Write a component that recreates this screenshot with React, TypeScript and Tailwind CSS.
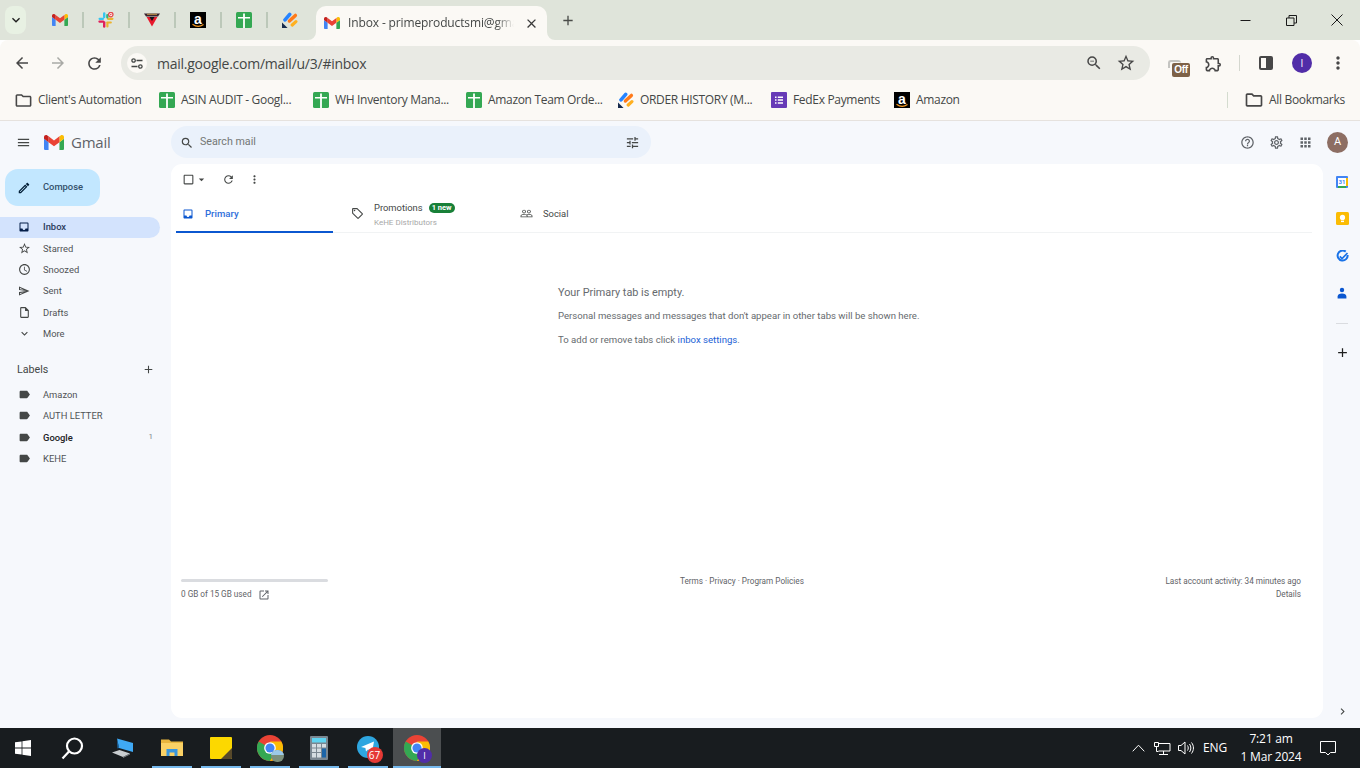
import React from "react";
import {
  MdAdd, MdApps, MdArrowBack, MdArrowDropDown, MdArrowForward, MdCheckBoxOutlineBlank, MdChevronRight, MdClose,
  MdExpandMore, MdInbox, MdKeyboardArrowDown, MdLabel, MdMenu, MdMoreVert, MdOutlineAccessTime, MdOutlineCreate,
  MdOutlineExtension, MdOutlineFolder, MdOutlineHelpOutline, MdOutlineInsertDriveFile, MdOutlineLocalOffer, MdOutlineOpenInNew,
  MdOutlineSend, MdOutlineSettings, MdOutlineStarBorder, MdPeopleOutline, MdRefresh, MdSearch, MdTune, MdZoomOut,
} from "react-icons/md";

const GmailM = ({ w = 16, h = 12 }: { w?: number; h?: number }) => (
  <svg width={w} height={h} viewBox="52 42 88 66">
    <path fill="#4285f4" d="M58 108h14V74L52 59v43c0 3.32 2.69 6 6 6" />
    <path fill="#34a853" d="M120 108h14c3.32 0 6-2.69 6-6V59l-20 15" />
    <path fill="#fbbc04" d="M120 48v26l20-15v-8c0-7.42-8.47-11.65-14.4-7.2" />
    <path fill="#ea4335" d="M72 74V48l24 18 24-18v26L96 92" />
    <path fill="#c5221f" d="M52 51v8l20 15V48l-5.6-4.2c-5.94-4.45-14.4-.22-14.4 7.2" />
  </svg>
);

const Sheets = () => (
  <svg width="16" height="16" viewBox="0 0 16 16">
    <rect width="16" height="16" rx="1.5" fill="#34a853" />
    <path d="M7.1 1.5h1.8v3.4H14v1.7H8.900V16H7.100V6.600H2V4.900h5.100z" fill="#fff" />
  </svg>
);

const Slack = () => (
  <svg width="16" height="16" viewBox="0 0 16 16">
    <path d="M6.2 1.5v3.6" stroke="#36c5f0" strokeWidth="2.4" strokeLinecap="round" />
    <path d="M1.6 6.8h3.4" stroke="#36c5f0" strokeWidth="2.2" strokeLinecap="round" />
    <path d="M1.4 9.6h3.8" stroke="#e01e5a" strokeWidth="2.2" strokeLinecap="round" />
    <path d="M6.2 10.5v4" stroke="#e01e5a" strokeWidth="2.4" strokeLinecap="round" />
    <path d="M10 6.8h4.4" stroke="#ecb22e" strokeWidth="2.2" strokeLinecap="round" />
    <path d="M9.2 10.5h3.6M9.4 11v3.4" stroke="#ecb22e" strokeWidth="2.2" strokeLinecap="round" />
    <path d="M9.3 3v2.4" stroke="#2eb67d" strokeWidth="2.2" strokeLinecap="round" />
    <circle cx="12.8" cy="2.6" r="2.2" fill="#fff" stroke="#e5484d" strokeWidth="1.3" />
    <circle cx="12.8" cy="2.6" r=".8" fill="#e5484d" />
  </svg>
);

const Pennant = () => (
  <svg width="16" height="14" viewBox="0 0 16 14">
    <path d="M0 .5h16L14 3.4H2z" fill="#3a2430" />
    <path d="M3 1.3h10" stroke="#d5a24c" strokeWidth=".9" />
    <path d="M2.6 4h10.8L8 13.6z" fill="#e8192c" />
    <path d="M5.5 4h5L8 8z" fill="#12121a" />
  </svg>
);

const AmazonIcon = () => (
  <div className="relative w-[16px] h-[16px] bg-black flex justify-center shrink-0">
    <span className="text-white font-bold text-[14px] leading-[14px] font-['Liberation_Sans',sans-serif]">a</span>
    <svg className="absolute left-0 bottom-0" width="16" height="5" viewBox="0 0 16 5">
      <path d="M2.5 1.2c3.5 2.6 7.5 2.6 11 .3" stroke="#f59a23" strokeWidth="1.2" fill="none" />
    </svg>
  </div>
);

const Jira = () => (
  <svg width="16" height="16" viewBox="0 0 16 16">
    <path d="M3 7.800 7.700 2.300" stroke="#2684ff" strokeWidth="3.600" strokeLinecap="round" />
    <path d="M7.400 9 13.400 3.400" stroke="#ff7a1a" strokeWidth="3.400" strokeLinecap="round" />
    <path d="M10.200 13 13.900 9.600" stroke="#ffb020" strokeWidth="3.200" strokeLinecap="round" />
    <path d="M0 10.600 5.600 16H0z" fill="#172b4d" />
  </svg>
);

const Forms = () => (
  <svg width="16" height="16" viewBox="0 0 16 16">
    <rect width="16" height="16" rx="1" fill="#673ab7" />
    <path d="M4 4.4h1.5v1.5H4zM4 7.3h1.5v1.5H4zM4 10.2h1.5v1.5H4zM6.8 4.4H12v1.5H6.8zM6.8 7.3H12v1.5H6.8zM6.8 10.2H12v1.5H6.8z" fill="#fff" />
  </svg>
);

const Flare = ({ side }: { side: "l" | "r" }) => (
  <svg width="8" height="8" viewBox="0 0 8 8" className={side === "l" ? "absolute -left-[8px] bottom-0" : "absolute -right-[8px] bottom-0"}>
    <path d={side === "l" ? "M8 0v8H0a8 8 0 0 0 8-8z" : "M0 0v8h8a8 8 0 0 1-8-8z"} fill="#fbf9f5" />
  </svg>
);

const Sep = () => <div className="w-[2px] h-[16px] bg-[#bcc8b9] shrink-0" />;

const PinnedSlot = ({ children }: { children: React.ReactNode }) => (
  <div className="w-[44px] h-full flex items-center justify-center shrink-0">{children}</div>
);

function TabStrip() {
  return (
    <div className="h-[40px] bg-[#dfe4da] flex shrink-0 pl-[5px]">
      <div className="mt-[6px] w-[21px] h-[28px] rounded-lg bg-[#e8f1e3] flex items-center justify-center text-[#1f1f1f]">
        <MdKeyboardArrowDown size={16} />
      </div>
      <div className="ml-[12px] flex items-center h-[40px]">
        <PinnedSlot><GmailM /></PinnedSlot><Sep />
        <PinnedSlot><Slack /></PinnedSlot><Sep />
        <PinnedSlot><Pennant /></PinnedSlot><Sep />
        <PinnedSlot><AmazonIcon /></PinnedSlot><Sep />
        <PinnedSlot><Sheets /></PinnedSlot><Sep />
        <PinnedSlot><Jira /></PinnedSlot>
      </div>
      <div className="relative ml-[4px] mt-[6px] w-[231px] h-[34px] bg-[#fbf9f5] rounded-t-[10px] flex items-center pl-[8px]">
        <Flare side="l" />
        <Flare side="r" />
        <GmailM />
        <div className="ml-[8px] w-[166px] h-[18px] overflow-hidden [mask-image:linear-gradient(to_left,transparent,black_18px)]">
          <div className="w-[260px] text-[12px] leading-[18px] text-[#444746] font-['Open_Sans',sans-serif] tracking-[-0.13px]">
            Inbox - primeproductsmi@gmail.com
          </div>
        </div>
        <MdClose size={15} className="ml-[10px] text-[#3b3b3b]" />
      </div>
      <div className="ml-[13px] mt-[12px] w-[16px] h-[16px] text-[#4a4c49] flex items-center justify-center">
        <MdAdd size={17} />
      </div>
      <div className="ml-auto flex items-center h-[40px] text-[#1a1a1a]">
        <div className="w-[46px] flex justify-center">
          <svg width="11" height="11" viewBox="0 0 11 11"><path d="M.5 5.5h10" stroke="currentColor" strokeWidth="1" /></svg>
        </div>
        <div className="w-[46px] flex justify-center">
          <svg width="11" height="11" viewBox="0 0 11 11" fill="none" stroke="currentColor"><path d="M.5 3h7.5v7.5H.5zM3 3V.5h7.5V8H8" /></svg>
        </div>
        <div className="w-[46px] flex justify-center">
          <svg width="12" height="12" viewBox="0 0 12 12" fill="none" stroke="currentColor"><path d="M.5.5l11 11M11.5.5l-11 11" /></svg>
        </div>
      </div>
    </div>
  );
}

function Toolbar() {
  return (
    <div className="h-[44px] bg-[#fbf9f5] rounded-t-[8px] flex shrink-0 pt-[6px] text-[#474747]">
      <div className="w-[121px] h-[34px] flex items-center pl-[13px] gap-[18px] shrink-0">
        <MdArrowBack size={18} />
        <MdArrowForward size={18} className="text-[#a9aaa6]" />
        <MdRefresh size={19} />
      </div>
      <div className="w-[1029px] h-[34px] rounded-full bg-[#e9eae4] flex items-center pl-[6px] pr-[15px] shrink-0">
        <div className="w-[20px] h-[20px] rounded-full bg-[#fbf9f5] flex items-center justify-center">
          <svg width="12" height="11" viewBox="0 0 12 11" fill="none" stroke="#444746" strokeWidth="1.3">
            <circle cx="2.600" cy="2.500" r="1.700" />
            <path d="M5.500 2.500h6M.5 8.500h6" />
            <circle cx="9.400" cy="8.500" r="1.700" />
          </svg>
        </div>
        <span className="ml-[10px] text-[14px] text-[#444746] font-['Open_Sans',sans-serif] tracking-[-0.25px] whitespace-nowrap">
          mail.google.com/mail/u/3/#inbox
        </span>
        <MdZoomOut size={18} className="ml-auto" />
        <MdOutlineStarBorder size={20} className="ml-[13px] -mr-[1px]" />
      </div>
      <div className="relative ml-[18px] w-[23px] h-[34px] shrink-0">
        <div className="absolute left-[0px] top-[14px] w-[13px] h-[8px] rounded-t-[3px] border-t-2 border-l-2 border-[#c4c4c1]" />
        <div className="absolute left-[4px] top-[17px] w-[18px] h-[14px] rounded-[2px] bg-[#7d6147] text-white text-[10px] font-bold leading-[14px] text-center font-['Liberation_Sans',sans-serif] tracking-[-0.3px]">Off</div>
      </div>
      <div className="ml-[13px] h-[34px] flex items-center shrink-0">
        <MdOutlineExtension size={19} />
      </div>
      <div className="ml-[16px] mt-[9px] w-[1px] h-[16px] bg-[#d4d7cf] shrink-0" />
      <div className="ml-[19px] h-[34px] flex items-center shrink-0">
        <div className="w-[14px] h-[14px] rounded-[2px] border-2 border-[#474747] flex justify-end">
          <div className="w-[5px] bg-[#474747]" />
        </div>
      </div>
      <div className="ml-[19px] mt-[7px] w-[20px] h-[20px] rounded-full bg-[#512da8] text-white text-[10px] flex items-center justify-center font-['Open_Sans',sans-serif] shrink-0">I</div>
      <div className="ml-[16px] h-[34px] flex items-center shrink-0">
        <MdMoreVert size={20} />
      </div>
    </div>
  );
}

const bookmarkFont = "text-[12px] text-[#444746] font-['Open_Sans',sans-serif] whitespace-nowrap tracking-[-0.32px]";

const Bookmark = ({ icon, label, cls }: { icon: React.ReactNode; label: string; cls: string }) => (
  <div className="flex items-center gap-[6px] shrink-0">
    {icon}
    <span className={`${bookmarkFont} ${cls}`}>{label}</span>
  </div>
);

function Bookmarks() {
  return (
    <div className="h-[36px] bg-[#fbf9f5] flex items-center shrink-0 pl-[14px] pb-[4px] text-[#474747]">
      <div className="flex items-center gap-[16px]">
        <div className="flex items-center gap-[6px]">
          <MdOutlineFolder size={19} className="-mr-[1px]" />
          <span className={`${bookmarkFont} w-[105px]`}>Client's Automation</span>
        </div>
        <Bookmark icon={<Sheets />} label="ASIN AUDIT - Googl..." cls="w-[116px]" />
        <Bookmark icon={<Sheets />} label="WH Inventory Mana..." cls="w-[115px]" />
        <Bookmark icon={<Sheets />} label="Amazon Team Orde..." cls="w-[114px]" />
        <Bookmark icon={<Jira />} label="ORDER HISTORY (M..." cls="w-[115px]" />
        <Bookmark icon={<Forms />} label="FedEx Payments" cls="w-[85px]" />
        <Bookmark icon={<AmazonIcon />} label="Amazon" cls="w-[44px]" />
      </div>
      <div className="ml-[267px] w-[1px] h-[16px] bg-[#d4dccf]" />
      <MdOutlineFolder size={20} className="ml-[16px]" />
      <span className={`${bookmarkFont} ml-[5px]`}>All Bookmarks</span>
    </div>
  );
}

const sideText = "text-[9.4px] text-[#505356] font-['Roboto',sans-serif] leading-none";

const NavRow = ({ icon, label, active }: { icon: React.ReactNode; label: string; active?: boolean }) => (
  <div className={active ? "h-[21.33px] w-[160px] rounded-r-full bg-[#d3e3fd] flex items-center pb-[1px]" : "h-[21.33px] w-[160px] flex items-center pb-[1px]"}>
    <div className={active ? "w-[43px] flex justify-center pl-[5px] text-[#041e49]" : "w-[43px] flex justify-center pl-[5px] text-[#444746]"}>{icon}</div>
    <span className={active ? `${sideText} font-medium !text-[#2a3b5c]` : sideText}>{label}</span>
  </div>
);

const LabelRow = ({ label, count, bold }: { label: string; count?: string; bold?: boolean }) => (
  <div className="h-[21.33px] w-[160px] flex items-center pr-[7px]">
    <div className="w-[43px] flex justify-center pl-[5px] text-[#444746]"><MdLabel size={13} /></div>
    <span className={bold ? `${sideText} font-medium !text-[#202124]` : sideText}>{label}</span>
    {count && <span className="ml-auto text-[8px] text-[#80868b] font-['Roboto',sans-serif]">{count}</span>}
  </div>
);

function Sidebar() {
  return (
    <div className="w-[171px] shrink-0 flex flex-col">
      <div className="mt-[5px] ml-[5px] w-[95px] h-[37px] rounded-[13px] bg-[#c2e7ff] flex items-center pl-[12px] text-[#001d35] shrink-0">
        <MdOutlineCreate size={14} />
        <span className="ml-[12px] text-[9.4px] font-medium text-[#33506a] font-['Roboto',sans-serif]">Compose</span>
      </div>
      <div className="mt-[11px] flex flex-col">
        <NavRow active icon={<MdInbox size={12} />} label="Inbox" />
        <NavRow icon={<MdOutlineStarBorder size={13} />} label="Starred" />
        <NavRow icon={<MdOutlineAccessTime size={13} />} label="Snoozed" />
        <NavRow icon={<MdOutlineSend size={12} />} label="Sent" />
        <NavRow icon={<MdOutlineInsertDriveFile size={13} />} label="Drafts" />
        <NavRow icon={<MdExpandMore size={13} />} label="More" />
      </div>
      <div className="mt-[15px] h-[20px] w-[160px] flex items-center justify-between pl-[17px] pr-[5px] text-[#444746]">
        <span className="text-[10.7px] font-['Roboto',sans-serif]">Labels</span>
        <MdAdd size={13} />
      </div>
      <div className="mt-[4px] flex flex-col">
        <LabelRow label="Amazon" />
        <LabelRow label="AUTH LETTER" />
        <LabelRow bold label="Google" count="1" />
        <LabelRow label="KEHE" />
      </div>
    </div>
  );
}

const tabLabel = "text-[9.4px] font-['Roboto',sans-serif] leading-none";

function MainCard() {
  const small = "text-[8.2px] text-[#5f6368] font-['Roboto',sans-serif] leading-[13px]";
  return (
    <div className="flex-1 h-[554px] bg-white rounded-[11px] flex flex-col">
      <div className="h-[31px] flex items-center pl-[11px] text-[#444746] shrink-0">
        <MdCheckBoxOutlineBlank size={13} />
        <MdArrowDropDown size={13} />
        <MdRefresh size={13} className="ml-[14px]" />
        <MdMoreVert size={13} className="ml-[13px]" />
      </div>
      <div className="h-[38px] ml-[5px] mr-[11px] border-b border-[#f1f3f4] flex shrink-0">
        <div className="w-[157px] h-[38px] border-b-[2px] border-[#0b57d0] flex items-center pl-[6px] pt-[1px] text-[#0b57d0]">
          <MdInbox size={12} />
          <span className="text-[9.6px] font-['Roboto',sans-serif] leading-none ml-[11px] font-medium text-[#2f6fdb]">Primary</span>
        </div>
        <div className="w-[169px] h-[37px] flex items-center pl-[18px] text-[#444746]">
          <MdOutlineLocalOffer size={13} />
          <div className="ml-[10px] pt-[2px] flex flex-col">
            <div className="flex items-center gap-[5px]">
              <span className={tabLabel}>Promotions</span>
              <span className="ml-[1px] h-[10px] px-[3px] rounded-full bg-[#188038] text-white text-[7.5px] font-bold leading-[10px] font-['Roboto',sans-serif]">1 new</span>
            </div>
            <span className="mt-[6px] text-[8px] leading-none text-[#a8a8a8] font-['Roboto',sans-serif]">KeHE Distributors</span>
          </div>
        </div>
        <div className="h-[37px] flex items-center pl-[18px] text-[#444746]">
          <MdPeopleOutline size={13} />
          <span className={`${tabLabel} ml-[10px]`}>Social</span>
        </div>
      </div>
      <div className="pl-[387px] flex flex-col text-[#666a6e] font-['Roboto',sans-serif]">
        <p className="mt-[53px] text-[10.85px] leading-[14px]">Your Primary tab is empty.</p>
        <p className="mt-[9px] text-[9.58px] leading-[14px]">Personal messages and messages that don't appear in other tabs will be shown here.</p>
        <p className="mt-[10px] text-[9.58px] leading-[14px]">
          To add or remove tabs click <span className="text-[#1a62d6]">inbox settings</span>.
        </p>
      </div>
      <div className="mt-[228px] ml-[10px] mr-[22px] flex">
        <div className="w-[147px] flex flex-col">
          <div className="mt-[4px] h-[3px] rounded-full bg-[#dadce0]" />
          <div className="mt-[6px] flex items-center">
            <span className={small}>0 GB of 15 GB used</span>
            <MdOutlineOpenInNew size={12} className="ml-[6px] text-[#5f6368]" />
          </div>
        </div>
        <span className={`${small} ml-[352px]`}>Terms · Privacy · Program Policies</span>
        <div className={`${small} ml-auto text-right`}>
          <div>Last account activity: 34 minutes ago</div>
          <div>Details</div>
        </div>
      </div>
    </div>
  );
}

const RailSlot = ({ children }: { children: React.ReactNode }) => (
  <div className="h-[37.3px] flex items-center justify-center shrink-0">{children}</div>
);

function RightRail() {
  return (
    <div className="w-[37px] shrink-0 flex flex-col pl-[1px] -mt-[1px]">
      <RailSlot>
        <div className="relative w-[12px] h-[12px] bg-[#4285f4] rounded-[1px] flex items-center justify-center">
          <div className="w-[8px] h-[8px] bg-white text-[#4285f4] text-[6px] font-bold leading-[8px] text-center font-['Roboto',sans-serif]">31</div>
          <div className="absolute right-0 top-[2px] bottom-[2px] w-[2px] bg-[#fbbc04]" />
          <div className="absolute left-[2px] right-[2px] bottom-0 h-[2px] bg-[#34a853]" />
        </div>
      </RailSlot>
      <RailSlot>
        <svg width="13" height="13" viewBox="0 0 13 13">
          <rect width="13" height="13" rx="1.5" fill="#fbbc04" />
          <circle cx="6.5" cy="5.4" r="2.6" fill="#fff" />
          <rect x="5" y="8.6" width="3" height="1.5" fill="#fff" />
        </svg>
      </RailSlot>
      <RailSlot>
        <svg width="13" height="13" viewBox="0 0 13 13" fill="none">
          <path d="M9.7 1.6A5 5 0 1 0 11.6 5" stroke="#1a73e8" strokeWidth="2" />
          <path d="M3.8 6.3l2.3 2.3 5.4-5.6" stroke="#1a73e8" strokeWidth="1.7" />
        </svg>
      </RailSlot>
      <RailSlot>
        <svg width="12" height="13" viewBox="0 0 12 13">
          <circle cx="6" cy="3" r="2.2" fill="#0b57d0" />
          <path d="M1.6 11.6V9.6c0-2 1.8-3 4.4-3s4.4 1 4.4 3v2z" fill="#0b57d0" />
        </svg>
      </RailSlot>
      <div className="mt-[11px] mx-[12px] h-[1px] bg-[#dadce0]" />
      <div className="mt-[20px] flex justify-center h-[16px] items-center text-[#1f1f1f]">
        <MdAdd size={15} />
      </div>
      <div className="mt-auto mb-[10px] flex justify-center text-[#444746]">
        <MdChevronRight size={13} />
      </div>
    </div>
  );
}

function GmailApp() {
  return (
    <div className="h-[607px] bg-[#f6f8fc] border-t border-[#e6e2de] shrink-0 flex flex-col box-content">
      <div className="h-[43px] flex items-center shrink-0">
        <div className="w-[171px] flex items-center pl-[16px] text-[#5f6368] shrink-0">
          <MdMenu size={15} className="text-[#444746]" />
          <div className="ml-[13px]"><GmailM w={20} h={15} /></div>
          <span className="ml-[7px] text-[15px] leading-none font-['Open_Sans',sans-serif] tracking-[-0.25px]">Gmail</span>
        </div>
        <div className="w-[480px] h-[32px] -mt-[1px] rounded-full bg-[#eaf1fb] flex items-center pl-[9px] pr-[12px] pt-[1px] shrink-0">
          <MdSearch size={14} className="text-[#444746]" />
          <span className="ml-[6px] text-[10.7px] text-[#747775] font-['Roboto',sans-serif]">Search mail</span>
          <MdTune size={15} className="ml-auto -mr-[1px] text-[#444746]" />
        </div>
        <div className="ml-auto flex items-center text-[#5f6368] pr-[12px]">
          <MdOutlineHelpOutline size={15} />
          <MdOutlineSettings size={15} className="ml-[14px]" />
          <MdApps size={15} className="ml-[14px]" />
          <div className="ml-[14px] w-[21px] h-[21px] rounded-full bg-[#8d6e63] text-white text-[11px] flex items-center justify-center font-['Roboto',sans-serif]">A</div>
        </div>
      </div>
      <div className="flex-1 flex min-h-0">
        <Sidebar />
        <MainCard />
        <RightRail />
      </div>
    </div>
  );
}

const Chrome = ({ size = 26 }: { size?: number }) => (
  <svg width={size} height={size} viewBox="0 0 24 24">
    <circle cx="12" cy="12" r="12" fill="#ea4335" />
    <path d="M12 12 1.6 6A12 12 0 0 0 12 24l5.2-9z" fill="#34a853" />
    <path d="M12 6h10.4A12 12 0 0 1 12 24l5.2-9z" fill="#fbbc04" />
    <circle cx="12" cy="12" r="5.4" fill="#fff" />
    <circle cx="12" cy="12" r="4.2" fill="#4285f4" />
  </svg>
);

const TaskSlot = ({ children, open, active, cls }: { children: React.ReactNode; open?: boolean; active?: boolean; cls?: string }) => (
  <div className={`relative h-[40px] flex items-center justify-center shrink-0 ${active ? "w-[48px] ml-[1px] bg-[#4b4e50]" : "w-[49px]"} ${cls ?? ""}`}>
    {children}
    {open && <div className={`absolute bottom-0 h-[2px] bg-[#76b9ed] ${active ? "left-0 right-0" : "left-[5px] right-[4px]"}`} />}
  </div>
);

function Taskbar() {
  return (
    <div className="h-[40px] bg-[#181c1f] flex items-center shrink-0 text-white">
      <TaskSlot cls="pr-[3px]">
        <svg width="16" height="16" viewBox="0 0 16 16" fill="#fff">
          <path d="M0 2.3 6.6 1.4v6.2H0zM7.4 1.3 16 0v7.6H7.4zM0 8.4h6.6v6.2L0 13.700zM7.4 8.4H16V16l-8.6-1.3z" />
        </svg>
      </TaskSlot>
      <TaskSlot cls="pr-[3px]">
        <svg width="23" height="23" viewBox="0 0 23 23" fill="none" stroke="#fff" strokeWidth="2.2">
          <circle cx="13.5" cy="9" r="7.5" />
          <path d="M8 14.5 1.5 21.5" />
        </svg>
      </TaskSlot>
      <TaskSlot>
        <svg width="24" height="22" viewBox="0 0 24 22">
          <path d="M6 1.5 22 6v9L8 11z" fill="#3fa9f5" />
          <path d="M6 1.5 8 11l-1.5.5z" fill="#1d6fb0" />
          <path d="M1 15.5 8.5 13 19 16.5 12 20z" fill="#c9cdd0" />
          <path d="M12 20l7-3.5v1L12 21z" fill="#7f8487" />
        </svg>
      </TaskSlot>
      <TaskSlot open>
        <svg width="22" height="20" viewBox="0 0 22 20">
          <path d="M0 1.5h8l2 2h12V18H0z" fill="#e8b53e" />
          <path d="M0 5h22v13H0z" fill="#fad165" />
          <path d="M5.5 11h11v7h-3v-3.5h-5V18h-3z" fill="#3a96dd" />
        </svg>
      </TaskSlot>
      <TaskSlot open>
        <svg width="22" height="22" viewBox="0 0 22 22">
          <rect width="22" height="22" rx="1" fill="#fcd800" />
          <path d="M22 11v10a1 1 0 0 1-1 1H11z" fill="#57492a" />
        </svg>
      </TaskSlot>
      <TaskSlot open>
        <div className="relative w-[26px] h-[26px]">
          <Chrome />
          <div className="absolute -right-[1px] -bottom-[1px] w-[13px] h-[12px] rounded-full bg-[#7b8f7c] overflow-hidden">
            <div className="h-[5px] bg-[#9bc8e8]" />
          </div>
        </div>
      </TaskSlot>
      <TaskSlot open>
        <svg width="18" height="24" viewBox="0 0 18 24">
          <rect width="18" height="24" rx="1" fill="#7a8791" />
          <rect x="2" y="2" width="14" height="4.5" fill="#5fd3f0" />
          <path d="M2 8h4v3.5H2zM7 8h4v3.5H7zM2 12.5h4V16H2zM7 12.5h4V16H7zM2 17h4v4.5H2zM7 17h4v4.5H7z" fill="#d5dde2" />
          <path d="M12 8h4v3.5h-4z" fill="#d5dde2" />
          <path d="M12 12.5h4v9h-4z" fill="#1c65a8" />
        </svg>
      </TaskSlot>
      <TaskSlot open cls="pl-[2px]">
        <div className="relative w-[24px] h-[24px]">
          <svg width="22" height="22" viewBox="0 0 22 22">
            <circle cx="11" cy="11" r="11" fill="#2ea6e0" />
            <path d="M4 11 17 5.6l-2 11-4-3-2 2-.6-3.6z" fill="#fff" />
          </svg>
          <div className="absolute -right-[2px] bottom-[-3px] w-[16px] h-[16px] rounded-full bg-[#e53935] text-[10px] text-white text-center leading-[16px] font-['Open_Sans',sans-serif]">67</div>
        </div>
      </TaskSlot>
      <TaskSlot open active>
        <div className="relative w-[26px] h-[26px]">
          <Chrome />
          <div className="absolute -right-[2px] -bottom-[2px] w-[15px] h-[15px] rounded-full bg-[#512da8] text-[9px] text-white text-center leading-[15px] font-['Open_Sans',sans-serif]">I</div>
        </div>
      </TaskSlot>
      <div className="ml-auto flex items-center h-full text-[12px] font-['Open_Sans',sans-serif] tracking-[-0.2px]">
        <div className="w-[24px] flex justify-center">
          <svg width="13" height="8" viewBox="0 0 13 8" fill="none" stroke="#fff"><path d="M.7 7.3 6.5 1.2l5.8 6.1" /></svg>
        </div>
        <div className="w-[24px] flex justify-center">
          <svg width="17" height="15" viewBox="0 0 17 15" fill="none" stroke="#fff">
            <path d="M.5 1.5h4v4h-4zM4.5 2.5h11.5v7.5H4.5M9.5 10v3M5 13.5h9M2.5 5.5v5h2" />
          </svg>
        </div>
        <div className="w-[24px] flex justify-center">
          <svg width="17" height="14" viewBox="0 0 17 14" fill="none" stroke="#fff">
            <path d="M.5 4.5h2.5L7 1v12L3 9.5H.5zM9.5 4.5c1 1.500 1 3.500 0 5M11.500 3c1.800 2.500 1.800 5.500 0 8M13.500 1.500c2.600 3.400 2.600 7.600 0 11" />
          </svg>
        </div>
        <div className="w-[34px] text-center">ENG</div>
        <div className="w-[78px] flex flex-col items-center leading-[18px]">
          <span>7:21 am</span>
          <span>1 Mar 2024</span>
        </div>
        <div className="w-[35px] flex justify-center">
          <svg width="16" height="15" viewBox="0 0 16 15" fill="none" stroke="#fff"><path d="M.5.5h15v11h-5l-2.500 2.500L5.500 11.500h-5z" /></svg>
        </div>
        <div className="w-[15px]" />
      </div>
    </div>
  );
}

export default function App() {
  return (
    <div className="w-[1360px] h-[768px] overflow-hidden flex flex-col">
      <TabStrip />
      <Toolbar />
      <Bookmarks />
      <GmailApp />
      <Taskbar />
    </div>
  );
}
